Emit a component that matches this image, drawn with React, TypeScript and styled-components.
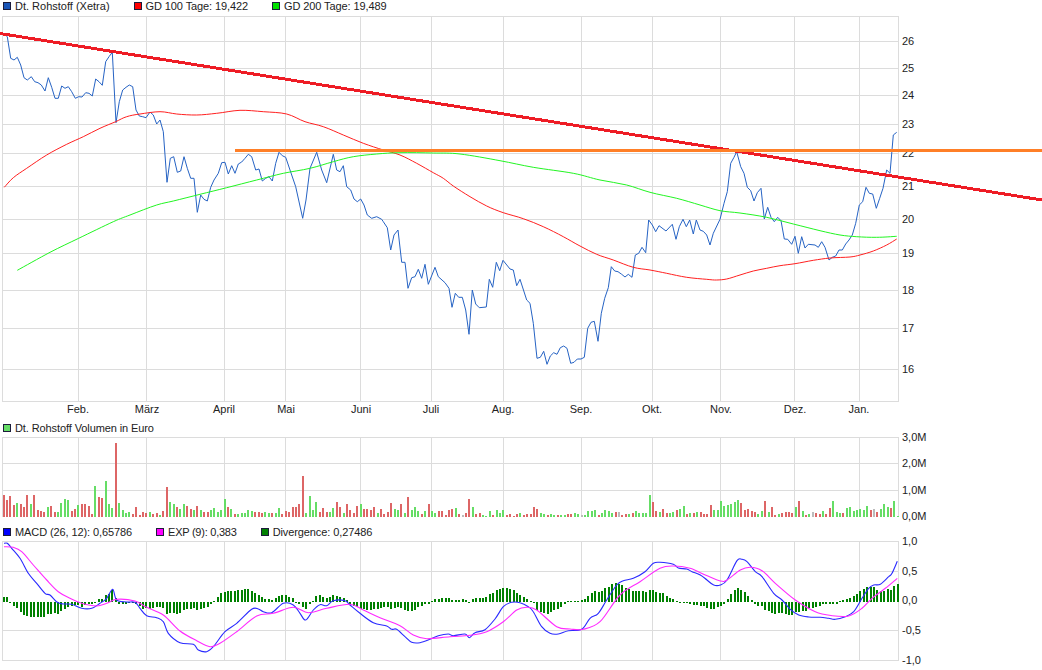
import React from 'react'
import styled, {createGlobalStyle} from 'styled-components'

const GRID_X = [2.5, 78.5, 146.5, 224.5, 285.5, 360.5, 431.5, 503.5, 581.5, 652.5, 720.5, 794.5, 859.5, 898.5]
const MONTHS: [string, number][] = [
  ['Feb.', 78], ['März', 147], ['April', 224], ['Mai', 286], ['Juni', 361], ['Juli', 431],
  ['Aug.', 503], ['Sep.', 581], ['Okt.', 652], ['Nov.', 721], ['Dez.', 795], ['Jan.', 859],
]
const PRICE_TICKS: [string, number][] = [
  ['26', 41.5], ['25', 68.5], ['24', 95.5], ['23', 124.5], ['22', 153.5], ['21', 186.5],
  ['20', 219.5], ['19', 253.5], ['18', 290.5], ['17', 328.5], ['16', 369.5],
]
const VOLUME_TICKS: [string, number][] = [['3,0M', 437.5], ['2,0M', 463.5], ['1,0M', 490.5], ['0,0M', 516.5]]
const MACD_TICKS: [string, number][] = [['1,0', 541.5], ['0,5', 571.5], ['0,0', 600.5], ['-0,5', 630.5], ['-1,0', 660.5]]

type Point = [number, number]

// points were read off 3x crops, so each run keeps the origin of its crop
const run = (x0: number, y0: number, data: string): Point[] =>
  data.trim().split(/\s+/).map(pair => {
    const [x, y] = pair.split(',').map(Number)
    return [x0 + x / 3, y0 + y / 3] as Point
  })

const toPolyline = (points: Point[]) => points.map(p => p.map(n => n.toFixed(1)).join(',')).join(' ')

// catmull-rom through the points, for the moving averages
const toCurve = (points: Point[]) => {
  let d = `M${points[0][0].toFixed(1)} ${points[0][1].toFixed(1)}`
  for (let i = 0; i < points.length - 1; i++) {
    const a = points[Math.max(i - 1, 0)]
    const b = points[i]
    const c = points[i + 1]
    const e = points[Math.min(i + 2, points.length - 1)]
    const c1 = [b[0] + (c[0] - a[0]) / 6, b[1] + (c[1] - a[1]) / 6]
    const c2 = [c[0] - (e[0] - b[0]) / 6, c[1] - (e[1] - b[1]) / 6]
    d += `C${c1[0].toFixed(1)} ${c1[1].toFixed(1)} ${c2[0].toFixed(1)} ${c2[1].toFixed(1)} ${c[0].toFixed(1)} ${c[1].toFixed(1)}`
  }
  return d
}

const PRICE: Point[] = [
  [2, 33],
  ...run(0, 0, `15,104 22,110 32,175 42,180 52,172 62,195 72,233 82,240 94,230 104,245 114,248 124,255 135,273 145,233 155,262 165,295 175,295 185,258 195,265 205,260 215,275 226,295 236,290 246,291 257,278 267,280 277,288 287,237 297,245 307,256 317,185 327,170 337,157 348,368 358,305 368,270 378,262 388,255 398,260 408,330 418,348 428,350 438,353 450,336 460,345 470,372 480,360 490,395 501,547 511,475 521,470 532,517 542,513 552,470 562,505 572,535 582,535 592,637 602,585 612,598 622,603 632,562 642,540 655,520 665,488 675,487 685,522 695,497 705,520 715,492 725,486 735,475 745,463 755,470 767,510 777,507 787,543 797,535 807,530 817,543 827,490 837,457 847,467 857,472 870,510 887,560 908,655 918,600 930,505 950,457 965,510 980,548 1000,463 1010,510 1020,515 1030,497 1040,560 1052,570 1062,597 1072,605 1082,597 1092,615 1102,645 1115,655 1130,650 1145,658`),
  ...run(370, 205, `40,50 52,68 62,135 72,90 84,75`),
  ...run(400, 130, `5,397 15,397 24,475 35,443 45,440 55,418 65,445 75,403 85,463 105,412 115,440 135,458 147,475 156,532 166,490 176,502 187,502 197,540 207,613 217,480 227,522 238,533 259,531 268,448 278,472 289,397 299,422 309,391 330,417 340,420 350,467 360,448 380,510 390,520 400,580 411,685 421,682 431,664 441,703 451,678 461,668 471,673 481,653 491,648 501,655 512,700 522,697 532,687 543,687 553,682 563,595 573,577 583,574 594,634 604,550 614,505 625,473 634,410 644,423 654,425 665,433 675,441 685,433 696,442 706,375 716,370 726,352 737,368 746,270 757,285 767,305 777,287 798,303 817,283 828,328 838,290 849,268 859,290 869,270 880,312 889,270 900,300 910,304 920,315 930,345 940,310 960,268`),
  ...run(700, 120, `72,250 82,215 92,130 102,112 110,95 122,140 132,160 142,202 152,212 162,243 172,218 183,205 193,297 203,262 213,292 223,305 233,292 243,302 253,357 263,358 275,373 285,349 295,400 305,350 315,384 325,373 345,375 355,382 365,365 375,382 387,420 397,412 407,408 417,390 427,390 437,372 447,360 457,345 467,310 478,255 488,245 498,202 508,220 518,222 529,265 539,235 549,205 560,150 570,160 580,45 590,37`),
]

const MA100: Point[] = [
  ...run(0, 0, `13,562 40,533 80,505 140,465 200,433 250,410 300,385 347,365 380,350 420,342 480,335 530,342 590,345 650,340 720,331 790,335 860,342 915,365 970,380 1030,405 1090,430 1150,450`),
  ...run(400, 130, `0,75 50,100 100,128 130,145 160,168 210,200 260,228 310,248 370,266 430,290 490,320 540,348 590,373 640,390 700,412 750,420 800,430 860,442 920,448`),
  ...run(700, 120, `50,480 80,477 120,465 160,453 200,445 240,437 285,431 340,421 390,414 450,411 480,405 520,393 560,375 590,357`),
]

const MA200: Point[] = [
  ...run(0, 200, `52,211 150,157 236,115 340,65 390,45`),
  ...run(0, 0, `470,615 520,603 600,583 680,563 770,540 850,520 930,505 1000,485 1060,470 1130,462`),
  ...run(400, 130, `0,68 100,69 180,72 300,92 400,112 520,130 600,150 680,165 750,187 830,205 900,225`),
  ...run(700, 120, `60,272 120,279 200,292 280,312 360,332 420,345 470,350 530,352 590,349`),
]

const MACD: Point[] = [
  ...run(0, 520, `12,70 22,70 35,85 60,115 85,160 110,190 135,220 150,225 172,247 190,252 215,253 245,265 275,265 300,250 320,235 338,208 350,240 380,246 405,247 420,265 440,287 470,293 490,305 505,340 540,368 580,373 595,390 620,395 640,380 675,335 710,310 755,268 775,267 790,275 815,278 850,250 880,255 900,280 917,300 940,270 960,254 980,257 1000,242 1035,242`),
  ...run(350, 520, `0,255 30,280 70,308 110,318 125,328 140,328 165,350 185,367 210,368 240,358 265,347 295,342 310,347 345,342 358,353 375,338 405,329 435,297 460,260 485,247 510,248 535,260 550,275 575,320 600,340 625,342 655,332 695,328 720,295 745,280 770,240 800,195 820,182 850,175 885,155 910,130 930,127 970,133 985,144 1010,147`),
  ...run(692, 520, `0,155 25,165 45,180 65,195 85,195 105,180 135,122 150,118 165,125 190,155 210,170 245,220 270,240 295,268 320,285 350,291 385,292 410,295 430,298 460,290 485,275 510,235 530,205 545,195 565,193 590,170 600,160 616,124`),
]

const EXP: Point[] = [
  ...run(0, 520, `12,80 40,82 65,95 100,135 140,180 175,215 210,235 245,250 290,258 320,250 350,238 405,243 440,262 490,285 540,333 590,362 630,380 660,370 710,335 770,288 820,280 880,262 925,278 980,265`),
  ...run(350, 520, `0,253 40,270 90,293 150,317 190,345 230,356 300,350 360,346 410,335 460,305 500,270 530,262 560,270 620,320 660,327 700,328 750,305 810,225 870,185 930,145 970,138 1020,145`),
  ...run(692, 520, `40,165 85,183 105,180 145,150 175,142 210,152 250,190 310,240 370,275 420,287 470,288 510,265 540,235 580,205 616,175`),
]

const VOLUME = `r22 r17 r21 r12 g14 r13 r10 r22 g13 r22 r7 r6 r5 g10 r11 r5 g5 g14 g18 g17 r6 r8 g12 r13 r13 r11 r3 g31 r20 r19 g36 g13 g9 r74 g14 g7 g4 g5 r3 r10 r2 r5 r4 g5 r3 r4 g2 r6 r30 g15 g13 r10 g8 g13 r11 r8 g7 r11 g7 r5 r5 g7 g9 g5 g7 g18 r10 g8 r3 g3 g4 g4 g7 g6 r5 r5 r4 g5 g4 r4 g4 g9 r3 r6 r5 r10 r10 r13 r41 g4 g21 g7 g15 r5 r9 r5 g5 g9 r15 r10 g4 r13
r7 r4 r11 g13 r8 r8 r7 r10 g4 r8 r3 r5 r14 g8 g7 r13 g4 r20 g7 g10 g6 r3 g6 r13 g6 g4 r6 r6 r2 r7 r8 g9 r3 y2 r4 r18 g10 r3 r4 g2 g1 g6 r2 g7 g4 g7 r2 r3 r1 r3 g4 r2 r3 r3 r10 r8 g4 g3 r2 g3 g2 r2 g2 g2 r3 r3 g4 g3 y2 g2 g6 g6 g7 r2 g4 g7 g6 g4 r5 y5 r2 r3 g3 r4 g6 g4 g4 g4 g22 r15 r6 g5 r8 r4 g4 g5 r7 g8 g11 r3 g4
r4 g5 r5 r3 r3 r12 g7 g7 g16 g11 g12 g13 g15 g17 r14 r7 r8 r6 r5 g3 g6 r16 g5 r10 r2 g3 r4 r5 r5 r4 g10 r16 g6 r2 g3 y5 r4 r3 g6 r3 r9 g16 g5 g4 r4 g9 g10 g6 g7 g8 g7 g11 r7 y8 r5 g8 g13 g10 r9 g16 g1`
  .trim().split(/\s+/)

const DIVERGENCE = `5 5 -1 -4 -6 -10 -13 -14 -15 -15 -15 -15 -15 -12 -12 -11 -12 -9 -7 -5 -4 -3 -3 -5 -3 -2 -2 -1 3 3 7 8 12 4 -2 -2 -2 -1 -1 -2 -4 -7 -6 -7 -6 -5 -5 -6 -12 -11 -11 -12 -11 -8 -7 -7 -6 -8 -7 -6 -5 -2 1 5 9 10 11 11 11 12 12 13 13 11 9 7 5 3 3 2 4 6 7 7 5 4 -1 -2 -5 -7 -2 1 6 7 5 4 5 7 6 5 4 2
-3 -4 -5 -7 -7 -8 -8 -7 -7 -6 -5 -5 -7 -6 -5 -6 -8 -9 -9 -8 -5 -4 -2 -2 1 3 3 4 4 4 2 2 2 3 2 -1 3 4 4 4 5 8 9 12 13 14 14 13 12 9 7 5 3 1 -1 -8 -10 -11 -12 -10 -8 -7 -5 -2 1 1 1 1 2 3 6 9 11 10 11 14 15 18 19 18 17 14 13 11 11 11 11 10 12 12 10 9 9 6 4 3 1 -1 -1 -1 -2
-3 -3 -4 -4 -6 -7 -7 -5 -4 -2 3 8 12 14 12 10 6 2 -2 -4 -4 -8 -9 -11 -12 -11 -11 -12 -13 -13 -10 -10 -9 -9 -6 -6 -5 -4 -2 -2 -2 -2 -2 1 2 3 4 6 8 11 13 15 15 15 12 11 11 13 12 16 18`
  .trim().split(/\s+/).map(Number)

const barX = (i: number) => Math.floor(4 + 3.4 * i) - 1

const BAR_COLORS: Record<string, string> = {r: '#dd6666', g: '#66dd66', y: '#bbbbbb'}

const GlobalStyle = createGlobalStyle`
  html, body {
    margin: 0;
    padding: 0;
    background: #fff;
  }
`

const Page = styled.div`
  display: flex;
  flex-direction: column;
  width: 1042px;
  height: 670px;
  overflow: hidden;
  font-family: "Liberation Sans", Arial, sans-serif;
  font-size: 11px;
  color: #222;
`

const Legend = styled.div`
  display: flex;
  align-items: center;
  gap: 24px;
  height: 12px;
  margin-bottom: 1px;
  padding-left: 3px;
  white-space: nowrap;
`

const LegendItem = styled.span<{$spacing?: number}>`
  display: flex;
  align-items: center;
  gap: 4px;
  letter-spacing: ${p => p.$spacing ?? -0.1}px;
`

const Swatch = styled.i<{$color: string}>`
  box-sizing: border-box;
  width: 8px;
  height: 8px;
  border: 1px solid #1c1c3a;
  background: ${p => p.$color};
`

const Chart = styled.svg`
  display: block;
  flex: none;
  overflow: visible;
`

const GridLine = styled.line`
  stroke: #dcdcdc;
  stroke-width: 1;
  shape-rendering: crispEdges;
`

const Label = styled.text`
  font-family: "Liberation Sans", Arial, sans-serif;
  font-size: 11px;
  fill: #222;
`

const Series = styled.path<{$color: string; $width?: number}>`
  fill: none;
  stroke: ${p => p.$color};
  stroke-width: ${p => p.$width ?? 1};
  stroke-linejoin: round;
`

const PriceLine = styled.polyline`
  fill: none;
  stroke: #2663c4;
  stroke-width: 1;
  stroke-linejoin: round;
`

const DrawnLine = styled.line<{$color: string}>`
  stroke: ${p => p.$color};
  stroke-width: 3;
  shape-rendering: crispEdges;
`

interface IGrid {
  top: number
  bottom: number
  rows: number[]
  ticks: [string, number][]
}

const Grid = ({top, bottom, rows, ticks}: IGrid) => (
  <>
    {rows.map(y => <GridLine key={y} x1={2} x2={899} y1={y} y2={y} />)}
    {GRID_X.map(x => <GridLine key={x} x1={x} x2={x} y1={top} y2={bottom} />)}
    {ticks.map(([text, y]) => <Label key={text} x={902} y={y} dy=".35em">{text}</Label>)}
  </>
)

const PriceChart = () => (
  <Chart width={1042} height={409} viewBox="0 13 1042 409">
    <Grid
      top={16.5}
      bottom={401.5}
      rows={[16.5, 41.5, 68.5, 95.5, 124.5, 153.5, 186.5, 219.5, 253.5, 290.5, 328.5, 369.5, 401.5]}
      ticks={PRICE_TICKS}
    />
    {MONTHS.map(([text, x]) => <Label key={text} x={x} y={409} dy=".35em" textAnchor="middle">{text}</Label>)}
    <PriceLine points={toPolyline(PRICE)} />
    <Series $color="#ff2020" d={toCurve(MA100)} />
    <Series $color="#22f522" d={toCurve(MA200)} />
    <DrawnLine $color="#ee1c25" x1={0} y1={33.5} x2={1042} y2={200} />
    <DrawnLine $color="#ff7f27" x1={235} y1={150.5} x2={1042} y2={150.5} />
  </Chart>
)

const VolumeChart = () => (
  <Chart width={1042} height={91} viewBox="0 435 1042 91">
    <Grid top={437.5} bottom={517} rows={[437.5, 463.5, 490.5]} ticks={VOLUME_TICKS} />
    {VOLUME.map((bar, i) => {
      const h = Number(bar.slice(1))
      return <rect key={i} x={barX(i)} y={517 - h} width={2} height={h} fill={BAR_COLORS[bar[0]]} />
    })}
  </Chart>
)

const MacdChart = () => (
  <Chart width={1042} height={131} viewBox="0 539 1042 131">
    <Grid top={541.5} bottom={660.5} rows={[541.5, 571.5, 630.5, 660.5]} ticks={MACD_TICKS} />
    {DIVERGENCE.map((v, i) => (
      <rect key={i} x={barX(i)} y={v > 0 ? 602 - v : 602} width={2} height={Math.abs(v)} fill="#008000" />
    ))}
    <Series $color="#2a2aff" $width={1.1} d={toCurve(MACD)} />
    <Series $color="#ff2aff" $width={1.1} d={toCurve(EXP)} />
  </Chart>
)

const App = () => (
  <Page>
    <GlobalStyle />
    <Legend>
      <LegendItem $spacing={0}><Swatch $color="#1a56b8" />Dt. Rohstoff (Xetra)</LegendItem>
      <LegendItem><Swatch $color="#ff0000" />GD 100 Tage: 19,422</LegendItem>
      <LegendItem><Swatch $color="#00e000" />GD 200 Tage: 19,489</LegendItem>
    </Legend>
    <PriceChart />
    <Legend>
      <LegendItem><Swatch $color="#66dd66" />Dt. Rohstoff Volumen in Euro</LegendItem>
    </Legend>
    <VolumeChart />
    <Legend>
      <LegendItem><Swatch $color="#0000ff" />MACD (26, 12): 0,65786</LegendItem>
      <LegendItem $spacing={-0.24}><Swatch $color="#ff00ff" />EXP (9): 0,383</LegendItem>
      <LegendItem><Swatch $color="#008000" />Divergence: 0,27486</LegendItem>
    </Legend>
    <MacdChart />
  </Page>
)

export default App
